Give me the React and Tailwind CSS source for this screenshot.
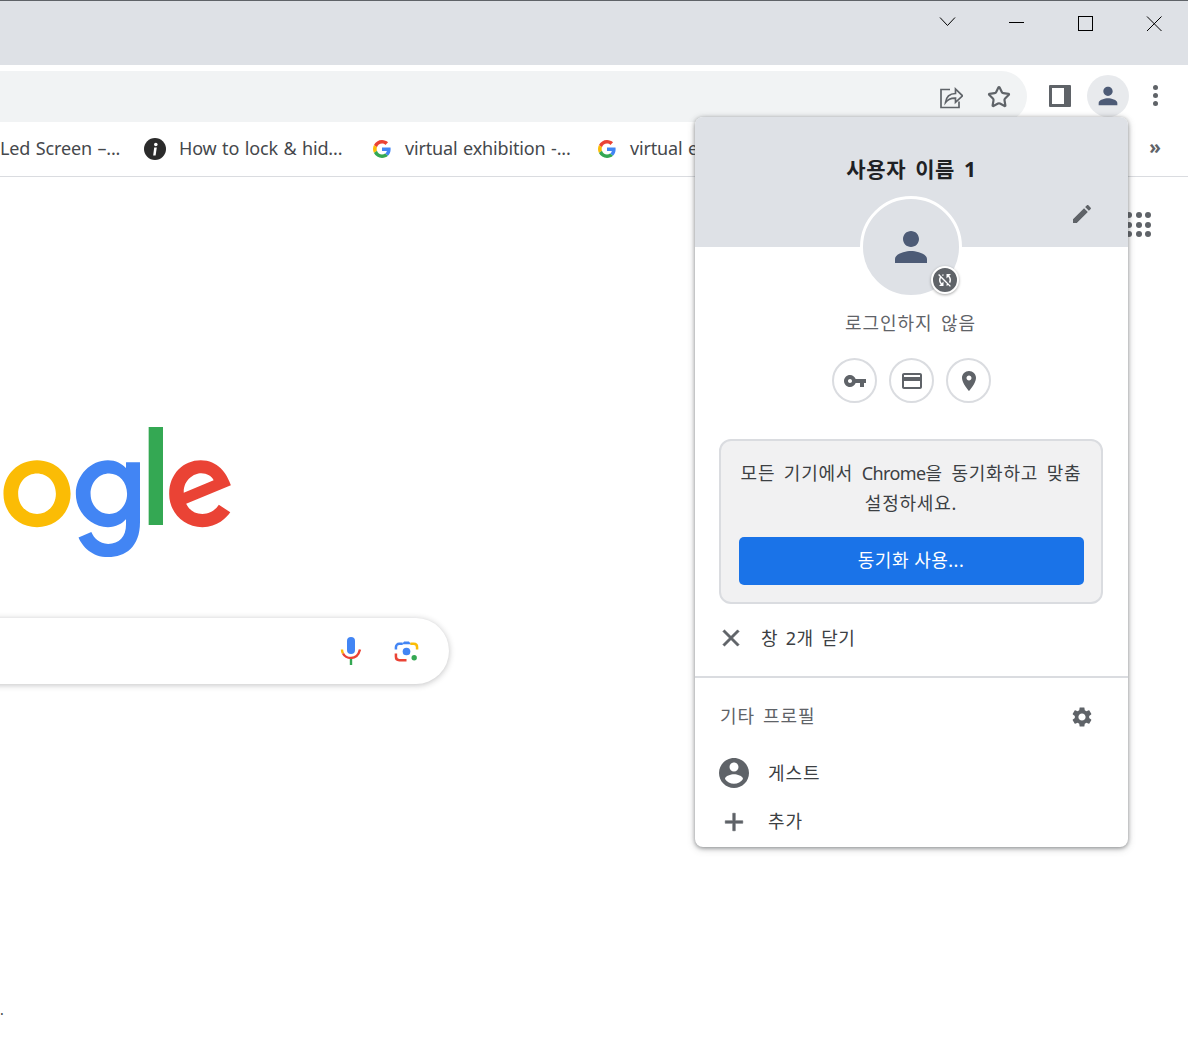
import React from 'react';
import { Star } from 'lucide-react';

const font = { fontFamily: '"Noto Sans", "Noto Sans CJK KR", sans-serif' };

const paths = {
  person: 'M12 12c2.21 0 4-1.79 4-4s-1.79-4-4-4-4 1.79-4 4 1.79 4 4 4zm0 2c-2.67 0-8 1.34-8 4v2h16v-2c0-2.66-5.33-4-8-4z',
  syncOff: 'M10 6.35V4.26c-.8.21-1.55.54-2.23.96l1.46 1.46c.25-.12.5-.24.77-.33zm-7.14-.94l2.36 2.36C4.45 8.99 4 10.44 4 12c0 2.21.91 4.2 2.36 5.64L4 20h6v-6l-2.24 2.24C6.68 15.15 6 13.66 6 12c0-1 .25-1.94.68-2.77l8.08 8.08c-.25.13-.5.25-.77.34v2.09c.8-.21 1.55-.54 2.23-.96l2.36 2.36 1.27-1.27L4.14 4.14 2.86 5.41zM20 4h-6v6l2.24-2.24C17.32 8.85 18 10.34 18 12c0 1-.25 1.94-.68 2.77l1.46 1.46C19.55 15.01 20 13.56 20 12c0-2.21-.91-4.2-2.36-5.64L20 4z',
  key: 'M12.65 10C11.83 7.67 9.61 6 7 6c-3.31 0-6 2.69-6 6s2.69 6 6 6c2.61 0 4.83-1.67 5.65-4H17v4h4v-4h2v-4H12.65zM7 14c-1.1 0-2-.9-2-2s.9-2 2-2 2 .9 2 2-.9 2-2 2z',
  card: 'M20 4H4c-1.11 0-1.99.89-1.99 2L2 18c0 1.11.89 2 2 2h16c1.11 0 2-.89 2-2V6c0-1.11-.89-2-2-2zm0 14H4v-6h16v6zm0-10H4V6h16v2z',
  place: 'M12 2C8.13 2 5 5.13 5 9c0 5.25 7 13 7 13s7-7.75 7-13c0-3.87-3.13-7-7-7zm0 9.5c-1.38 0-2.5-1.12-2.5-2.5s1.12-2.5 2.5-2.5 2.5 1.12 2.5 2.5-1.12 2.5-2.5 2.5z',
  edit: 'M3 17.25V21h3.75L17.81 9.94l-3.75-3.75L3 17.25zM20.71 7.04c.39-.39.39-1.02 0-1.41l-2.34-2.34c-.39-.39-1.02-.39-1.41 0l-1.83 1.83 3.75 3.75 1.83-1.83z',
  gear: 'M19.14 12.94c.04-.3.06-.61.06-.94 0-.32-.02-.64-.07-.94l2.03-1.58c.18-.14.23-.41.12-.61l-1.92-3.32c-.12-.22-.37-.29-.59-.22l-2.39.96c-.5-.38-1.03-.7-1.62-.94l-.36-2.54c-.04-.24-.24-.41-.48-.41h-3.84c-.24 0-.43.17-.47.41l-.36 2.54c-.59.24-1.13.57-1.62.94l-2.39-.96c-.22-.08-.47 0-.59.22L2.74 8.87c-.12.21-.08.47.12.61l2.03 1.58c-.05.3-.09.63-.09.94s.02.64.07.94l-2.03 1.58c-.18.14-.23.41-.12.61l1.92 3.32c.12.22.37.29.59.22l2.39-.96c.5.38 1.03.7 1.62.94l.36 2.54c.05.24.24.41.48.41h3.84c.24 0 .44-.17.47-.41l.36-2.54c.59-.24 1.13-.56 1.62-.94l2.39.96c.22.08.47 0 .59-.22l1.92-3.32c.12-.22.07-.47-.12-.61l-2.01-1.58zM12 15.6c-1.98 0-3.6-1.62-3.6-3.6s1.62-3.6 3.6-3.6 3.6 1.62 3.6 3.6-1.62 3.6-3.6 3.6z',
  account: 'M12 2C6.48 2 2 6.48 2 12s4.48 10 10 10 10-4.48 10-10S17.52 2 12 2zm0 3c1.66 0 3 1.34 3 3s-1.34 3-3 3-3-1.34-3-3 1.34-3 3-3zm0 14.2c-2.5 0-4.71-1.28-6-3.22.03-1.99 4-3.08 6-3.08 1.99 0 5.97 1.09 6 3.08-1.29 1.94-3.5 3.22-6 3.22z',
  close: 'M19 6.41 17.59 5 12 10.59 6.41 5 5 6.41 10.59 12 5 17.59 6.41 19 12 13.41 17.59 19 19 17.59 13.41 12z',
  plus: 'M19 13h-6v6h-2v-6H5v-2h6V5h2v6h6v2z',
};

const Icon = ({ d, size = 24, className = 'text-[#5f6368]', bold = false }) => (
  <svg width={size} height={size} viewBox="0 0 24 24" fill="currentColor" stroke={bold ? 'currentColor' : 'none'} strokeWidth={bold ? 0.5 : 0} className={`shrink-0 ${className}`}>
    <path d={d} />
  </svg>
);

const GoogleG = () => (
  <svg width="18" height="18" viewBox="0 0 48 48" className="shrink-0">
    <path fill="#EA4335" d="M24 9.5c3.54 0 6.71 1.22 9.21 3.6l6.85-6.85C35.9 2.38 30.47 0 24 0 14.62 0 6.51 5.38 2.56 13.22l7.98 6.19C12.43 13.72 17.74 9.5 24 9.5z" />
    <path fill="#4285F4" d="M46.98 24.55c0-1.57-.15-3.09-.38-4.55H24v9.02h12.94c-.58 2.96-2.26 5.48-4.78 7.18l7.73 6c4.51-4.18 7.09-10.36 7.09-17.65z" />
    <path fill="#FBBC05" d="M10.53 28.59c-.48-1.45-.76-2.99-.76-4.59s.27-3.14.76-4.59l-7.98-6.19C.92 16.46 0 20.12 0 24c0 3.88.92 7.54 2.56 10.78l7.97-6.19z" />
    <path fill="#34A853" d="M24 48c6.48 0 11.93-2.13 15.89-5.81l-7.73-6c-2.15 1.45-4.92 2.3-8.16 2.3-6.26 0-11.57-4.22-13.47-9.91l-7.98 6.19C6.51 42.62 14.62 48 24 48z" />
  </svg>
);

const Bookmark = ({ children, className = '' }) => (
  <span className={`mb-[3px] whitespace-nowrap text-[18px] leading-none tracking-[-0.15px] text-[#45484c] [word-spacing:1px] ${className}`}>{children}</span>
);

const RoundAction = ({ d }) => (
  <div className="flex h-[45px] w-[45px] items-center justify-center rounded-full border-2 border-[#dadce0] bg-white">
    <Icon d={d} />
  </div>
);

const ProfilePopup = () => (
  <div className="absolute left-[695px] top-[117px] flex h-[730px] w-[433px] flex-col overflow-hidden rounded-[8px] bg-white shadow-[0_1px_4px_rgba(60,64,67,0.55),0_2px_8px_rgba(60,64,67,0.2)]">
    <div className="relative h-[130px] shrink-0 bg-[#dee1e6] pt-[36px] text-center text-[21px] font-bold leading-[32px] tracking-[0.6px] text-[#202124] [word-spacing:3px]">
      사용자 이름 1
      <div className="absolute left-[375px] top-[85px]">
        <Icon d={paths.edit} />
      </div>
    </div>

    <div className="relative -mt-[51px] ml-[165px] flex h-[102px] w-[102px] items-center justify-center rounded-full border-[3px] border-white bg-[#dee1e6]">
      <Icon d={paths.person} size={48} className="text-[#4d5b76]" />
      <div className="absolute left-[68px] top-[67px] flex h-[28px] w-[28px] items-center justify-center rounded-full border-2 border-white bg-[#5f6368] shadow-[0_1px_3px_rgba(0,0,0,0.35)]">
        <Icon d={paths.syncOff} size={18} className="text-white" />
      </div>
    </div>

    <div className="mt-[11px] pr-[2px] text-center text-[18px] leading-[28px] tracking-[0.9px] text-[#5f6368] [word-spacing:3px]">로그인하지 않음</div>

    <div className="ml-[137px] mt-[21px] flex h-[45px] items-start gap-[12px]">
      <RoundAction d={paths.key} />
      <RoundAction d={paths.card} />
      <RoundAction d={paths.place} />
    </div>

    <div className="ml-[24px] mr-[25px] mt-[36px] flex h-[165px] flex-col items-center rounded-[12px] border-2 border-[#dadce0] bg-[#f1f1f2] px-[18px] pt-[17px] text-center text-[18px] leading-[30px] tracking-[0.8px] text-[#3c4043] [word-spacing:3px]">
      <p className="whitespace-nowrap">모든 기기에서 <span className="tracking-[-0.6px]">Chrome</span>을 동기화하고 맞춤<br />설정하세요.</p>
      <button className="mt-[19px] h-[48px] w-[345px] shrink-0 rounded-[5px] bg-[#1a73e8] pb-[2px] text-[18px] tracking-[0.5px] text-white">동기화 사용...</button>
    </div>

    <div className="ml-[22px] mt-[19px] flex h-[30px] items-center">
      <Icon d={paths.close} size={28} bold />
      <span className="ml-[16px] text-[18px] leading-[28px] tracking-[0.5px] text-[#3c4043] [word-spacing:2.5px]">창 2개 닫기</span>
    </div>

    <div className="mt-[23px] h-[2px] shrink-0 bg-[#dadce0]" />

    <div className="mt-[23px] flex h-[30px] items-center justify-between pl-[25px] pr-[34px] text-[18px] tracking-[0.9px] text-[#5f6368] [word-spacing:2.5px]">
      <span>기타 프로필</span>
      <div className="mt-[2px]">
        <Icon d={paths.gear} />
      </div>
    </div>

    <div className="ml-[21px] mt-[25px] flex h-[34px] items-center">
      <Icon d={paths.account} size={36} />
      <span className="ml-[16px] text-[18px] leading-[28px] tracking-[1px] text-[#3c4043]">게스트</span>
    </div>

    <div className="ml-[24px] mt-[15px] flex h-[34px] items-center">
      <Icon d={paths.plus} size={30} bold />
      <span className="mb-[2px] ml-[19px] text-[18px] leading-[28px] tracking-[1px] text-[#3c4043]">추가</span>
    </div>
  </div>
);

export default function App() {
  return (
    <div className="relative h-[1060px] w-[1188px] overflow-hidden bg-white" style={font}>
      {/* title bar */}
      <div className="flex h-[65px] items-start justify-end border-t border-[#5f6368] bg-[#dee1e6]">
        <svg width="250" height="40" viewBox="0 0 250 40" fill="none" stroke="#000" strokeWidth="1" className="mt-[8px]">
          <path d="M2 8.500l7.500 8 7.500-8" />
          <path d="M71 13.500h15" />
          <rect x="140.500" y="7.500" width="14" height="14" />
          <path d="M209 7.500l14.500 14.500M223.500 7.500L209 22" />
        </svg>
      </div>

      {/* toolbar */}
      <div className="flex h-[57px] items-end bg-white">
        <div className="-ml-[40px] flex h-[51px] w-[1067px] items-center justify-end rounded-r-[26px] bg-[#f1f3f4] pr-[16px]">
          <svg width="24" height="24" viewBox="0 0 24 24" fill="none" stroke="#5f6368" strokeWidth="1.7" className="mr-[24px]">
            <path d="M11 4.500H2v18h18v-6" />
            <path d="M6.500 17.500c.6-5.200 4.200-8.800 10-9V4l7 6.800-7 6.600v-4.300c-4-.2-7.500 1-10 4.400z" />
          </svg>
          <Star size={24} strokeWidth={2.2} color="#5f6368" />
        </div>
        <div className="mb-[15px] ml-[22px] flex h-[22px] w-[22px] rounded-[1px] bg-[#5f6368] py-[3px] pl-[3px] pr-[7px]">
          <div className="h-full w-full bg-white" />
        </div>
        <div className="mb-[5px] ml-[16px] flex h-[42px] w-[42px] items-center justify-center rounded-full bg-[#e8eaed]">
          <Icon d={paths.person} size={28} className="text-[#4d5b76]" />
        </div>
        <div className="mb-[16px] ml-[24px] flex flex-col gap-[3px]">
          <div className="h-[5px] w-[5px] rounded-full bg-[#5f6368]" />
          <div className="h-[5px] w-[5px] rounded-full bg-[#5f6368]" />
          <div className="h-[5px] w-[5px] rounded-full bg-[#5f6368]" />
        </div>
      </div>

      {/* bookmarks */}
      <div className="flex h-[55px] items-center border-b border-[#dadce0] bg-white">
        <Bookmark className="w-[144px]">Led Screen –...</Bookmark>
        <svg width="22" height="22" viewBox="0 0 22 22" className="shrink-0">
          <circle cx="11" cy="11" r="11" fill="#2b2b2b" />
          <circle cx="11.800" cy="6.500" r="1.800" fill="#fff" />
          <path d="M10.200 9.500h2.600l-1.200 8h-2.400z" fill="#fff" />
        </svg>
        <Bookmark className="ml-[13px] w-[194px]">How to lock &amp; hid...</Bookmark>
        <GoogleG />
        <Bookmark className="ml-[14px] w-[193px]">virtual exhibition -...</Bookmark>
        <GoogleG />
        <Bookmark className="ml-[14px]">virtual exhibition</Bookmark>
        <span className="mb-[3px] ml-auto mr-[27px] text-[19px] font-bold leading-none text-[#5f6368]">»</span>
      </div>

      {/* page */}
      <div className="flex flex-col">
        <div className="flex justify-end pr-[37px] pt-[35px]">
          <div className="grid grid-cols-3 gap-x-[3.500px] gap-y-[3.500px]">
            {Array.from({ length: 9 }).map((_, i) => (
              <div key={i} className="h-[6px] w-[6px] rounded-full bg-[#5f6368]" />
            ))}
          </div>
        </div>

        <svg width="240" height="140" viewBox="117 -1.660 159 92.800" className="mt-[183px]">
          <path fill="#FBBC05" d="M163.750 47.180c0 12.770-9.990 22.180-22.250 22.180s-22.250-9.410-22.250-22.180c0-12.850 9.990-22.180 22.250-22.180s22.250 9.320 22.250 22.180zm-9.740 0c0-7.980-5.790-13.440-12.510-13.440s-12.510 5.460-12.510 13.440c0 7.900 5.790 13.440 12.510 13.440s12.510-5.550 12.510-13.440z" />
          <path fill="#4285F4" d="M209.750 26.340v39.820c0 16.380-9.660 23.070-21.080 23.070-10.750 0-17.220-7.190-19.660-13.070l8.480-3.530c1.510 3.610 5.210 7.870 11.170 7.870 7.310 0 11.840-4.510 11.840-13v-3.190h-.34c-2.180 2.690-6.380 5.040-11.680 5.040-11.090 0-21.250-9.660-21.250-22.090 0-12.520 10.160-22.260 21.250-22.260 5.290 0 9.490 2.350 11.680 4.960h.34v-3.610h9.250zm-8.560 20.920c0-7.810-5.210-13.520-11.840-13.520-6.720 0-12.350 5.710-12.350 13.520 0 7.730 5.630 13.360 12.350 13.360 6.630 0 11.840-5.630 11.840-13.360z" />
          <path fill="#34A853" d="M225 3v65h-9.500V3h9.500z" />
          <path fill="#EA4335" d="M262.020 54.480l7.560 5.040c-2.440 3.610-8.320 9.830-18.480 9.830-12.600 0-22.010-9.740-22.010-22.180 0-13.190 9.490-22.180 20.920-22.180 11.510 0 17.140 9.160 18.980 14.110l1.010 2.520-29.650 12.280c2.270 4.450 5.800 6.720 10.750 6.720 4.960 0 8.400-2.440 10.920-6.140zm-23.270-7.980l19.820-8.230c-1.090-2.770-4.370-4.700-8.230-4.700-4.950 0-11.840 4.370-11.590 12.930z" />
        </svg>

        <div className="-ml-[100px] mt-[58px] flex h-[66px] w-[549px] items-center justify-end rounded-full bg-white pr-[30px] shadow-[0_1px_6px_rgba(32,33,36,0.28)]">
          <svg width="24" height="30" viewBox="0 0 24 30" className="mr-[31px]">
            <rect x="8" y="1" width="8" height="17" rx="4" fill="#4285f4" />
            <path d="M3 13.500c0 1.500.4 2.800 1 4" fill="none" stroke="#fbbc05" strokeWidth="2.400" />
            <path d="M4 17.500c1.500 2.800 4.500 4.500 8 4.500s7.500-2.500 9-8.500" fill="none" stroke="#ea4335" strokeWidth="2.400" />
            <rect x="10.800" y="23" width="2.400" height="6" fill="#34a853" />
          </svg>
          <svg width="25" height="25" viewBox="0 0 26 26" fill="none" strokeWidth="2.600">
            <path d="M2 11V8.500C2 6.500 3.500 5 5.500 5H9" stroke="#4285f4" />
            <path d="M8 5.500l2.500-3h5l2.500 3z" fill="#4285f4" />
            <path d="M17 5h3.500C22.500 5 24 6.500 24 8.500V11" stroke="#fbbc05" />
            <path d="M2 15v3.500C2 20.500 3.500 22 5.500 22H13" stroke="#ea4335" />
            <circle cx="13" cy="13" r="4" fill="#4285f4" />
            <circle cx="21" cy="19.500" r="2.800" fill="#34a853" />
          </svg>
        </div>

        <div className="mt-[316px] text-[14px] leading-[20px] text-[#3c4043]">.</div>
      </div>

      <ProfilePopup />
    </div>
  );
}
